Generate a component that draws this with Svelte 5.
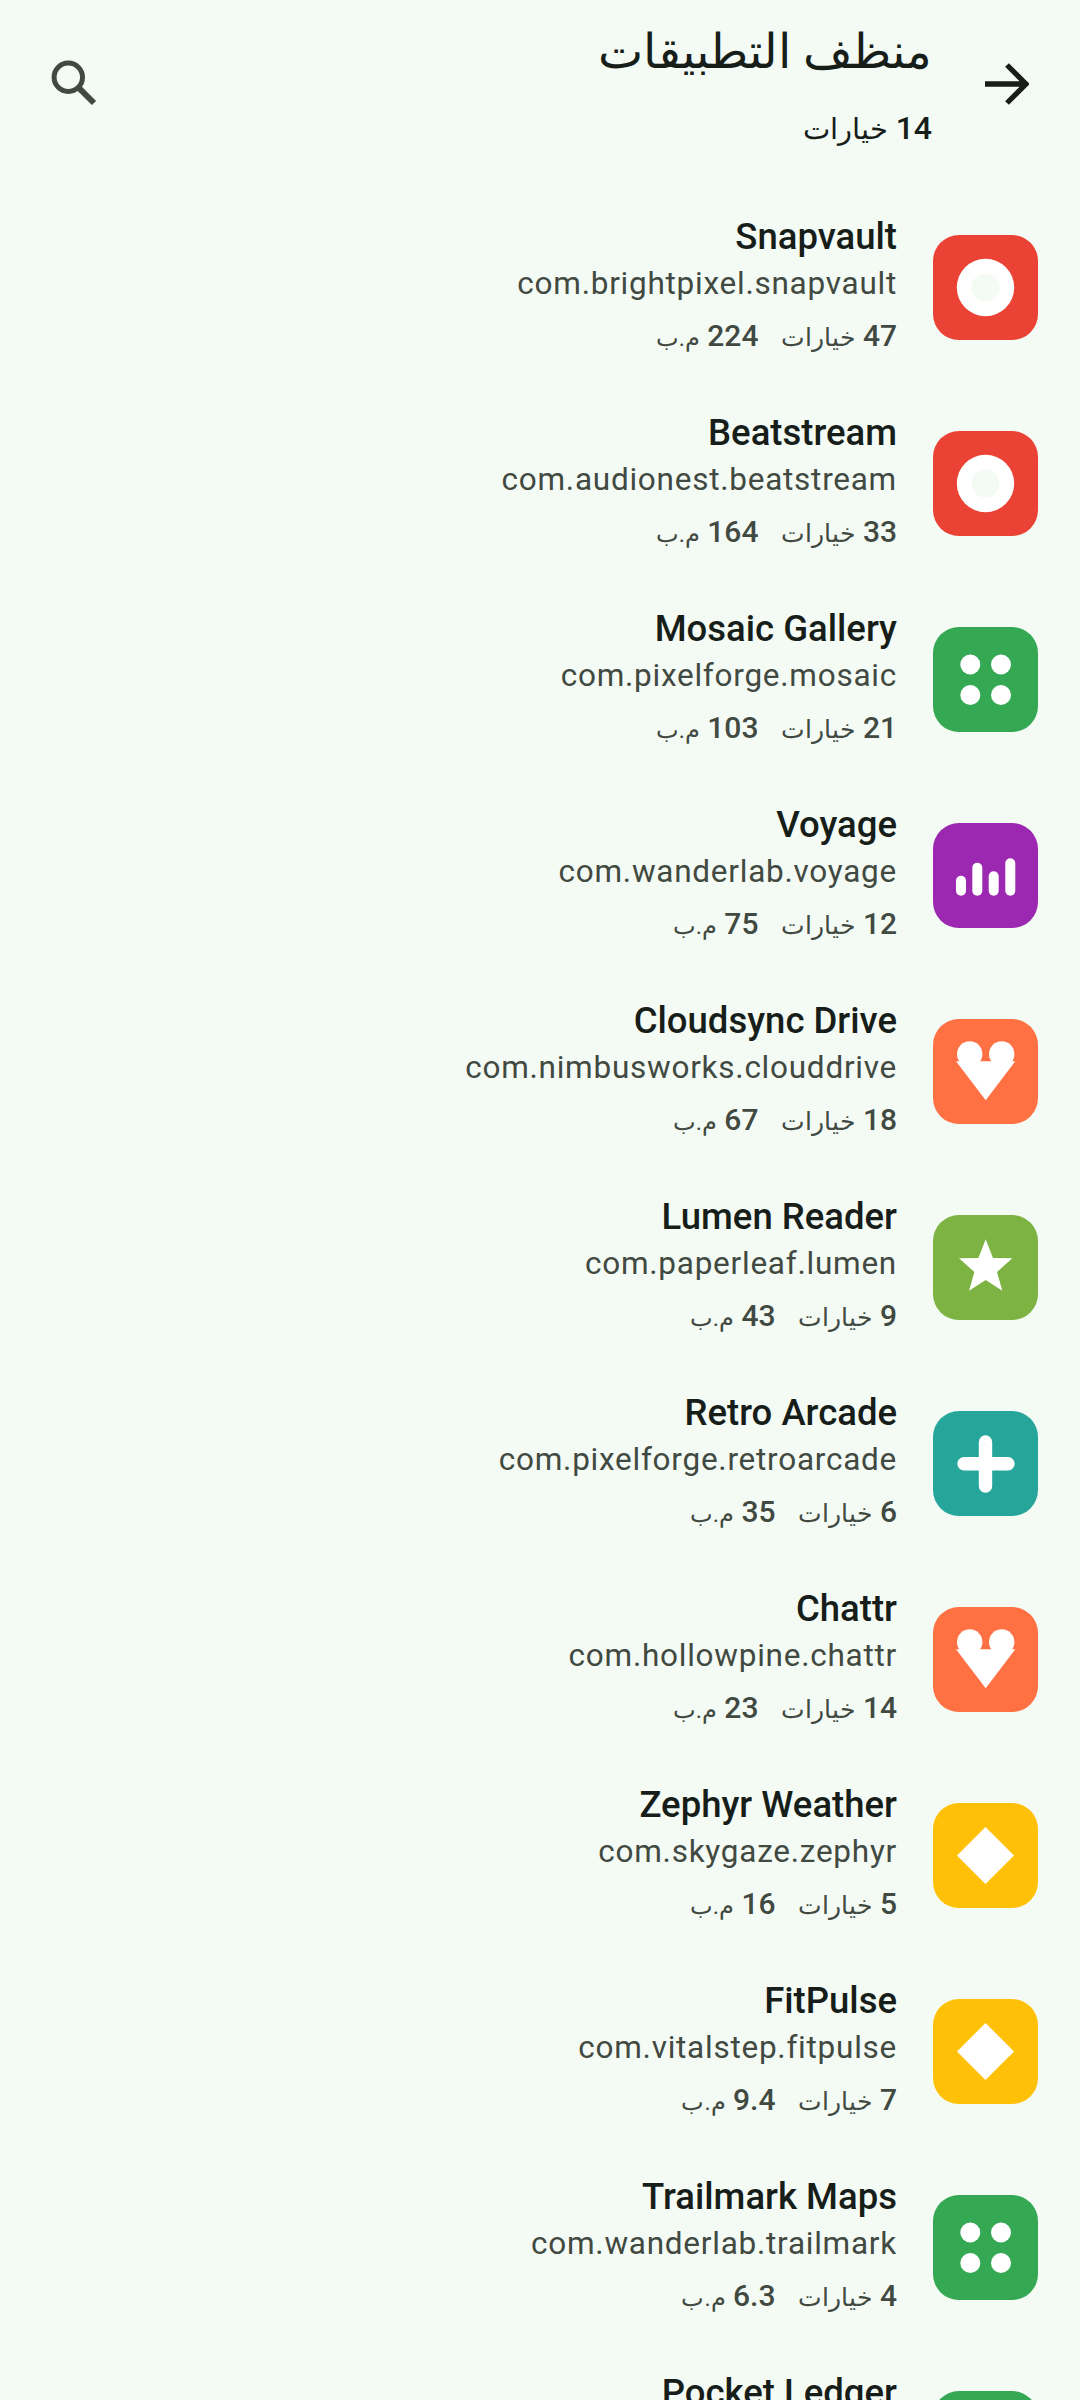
<script>
  const apps = [
    { name: 'Snapvault', pkg: 'com.brightpixel.snapvault', options: '47', size: '224', color: '#ea4335', icon: 'ring' },
    { name: 'Beatstream', pkg: 'com.audionest.beatstream', options: '33', size: '164', color: '#ea4335', icon: 'ring' },
    { name: 'Mosaic Gallery', pkg: 'com.pixelforge.mosaic', options: '21', size: '103', color: '#34a853', icon: 'dots' },
    { name: 'Voyage', pkg: 'com.wanderlab.voyage', options: '12', size: '75', color: '#9c27b0', icon: 'bars' },
    { name: 'Cloudsync Drive', pkg: 'com.nimbusworks.clouddrive', options: '18', size: '67', color: '#ff7043', icon: 'heart' },
    { name: 'Lumen Reader', pkg: 'com.paperleaf.lumen', options: '9', size: '43', color: '#7cb342', icon: 'star' },
    { name: 'Retro Arcade', pkg: 'com.pixelforge.retroarcade', options: '6', size: '35', color: '#26a69a', icon: 'plus' },
    { name: 'Chattr', pkg: 'com.hollowpine.chattr', options: '14', size: '23', color: '#ff7043', icon: 'heart' },
    { name: 'Zephyr Weather', pkg: 'com.skygaze.zephyr', options: '5', size: '16', color: '#ffc107', icon: 'diamond' },
    { name: 'FitPulse', pkg: 'com.vitalstep.fitpulse', options: '7', size: '9.4', color: '#ffc107', icon: 'diamond' },
    { name: 'Trailmark Maps', pkg: 'com.wanderlab.trailmark', options: '4', size: '6.3', color: '#34a853', icon: 'dots' },
    { name: 'Pocket Ledger', pkg: 'com.pocketledger.app', options: '3', size: '4.1', color: '#34a853', icon: 'dots' }
  ]
</script>

<div class="screen" dir="rtl">
  <header class="topbar">
    <button class="icon-btn back" aria-label="رجوع">
      <svg viewBox="0 0 44 44" width="44" height="44">
        <path d="M0 22H41M22 3L41 22L22 41" fill="none" stroke="#1a1c1a" stroke-width="5.3" />
      </svg>
    </button>
    <div class="heading">
      <h1>منظف التطبيقات</h1>
      <p class="count"><b>14</b> <span>خيارات</span></p>
    </div>
    <button class="icon-btn search" aria-label="بحث">
      <svg viewBox="0 0 50 50" width="50" height="50">
        <circle cx="18.3" cy="17.3" r="14.2" fill="none" stroke="#414941" stroke-width="5" />
        <path d="M28.3 27.3L44 43" fill="none" stroke="#414941" stroke-width="6" />
      </svg>
    </button>
  </header>

  <ul class="list">
    {#each apps as app}
      <li class="row">
        <div class="app-icon" style="background: {app.color}">
          <svg viewBox="0 0 105 105" width="105" height="105">
            {#if app.icon === 'ring'}
              <circle cx="52.5" cy="52.5" r="28.7" fill="#fff" />
              <circle cx="52.5" cy="52.5" r="14" fill="#f4fbf4" />
            {:else if app.icon === 'dots'}
              <circle cx="37.3" cy="37.5" r="10" fill="#fff" />
              <circle cx="68" cy="37.5" r="10" fill="#fff" />
              <circle cx="37.3" cy="68" r="10" fill="#fff" />
              <circle cx="68" cy="68" r="10" fill="#fff" />
            {:else if app.icon === 'bars'}
              <rect x="23" y="52.7" width="10" height="20" rx="5" fill="#fff" />
              <rect x="39.3" y="39.7" width="10" height="33" rx="5" fill="#fff" />
              <rect x="55.7" y="48.3" width="10" height="24.4" rx="5" fill="#fff" />
              <rect x="72.3" y="35.3" width="10" height="37.4" rx="5" fill="#fff" />
            {:else if app.icon === 'heart'}
              <circle cx="36.7" cy="35" r="12.7" fill="#fff" />
              <circle cx="68.7" cy="35" r="12.7" fill="#fff" />
              <path d="M23 42.3H82.3L52.7 81.3Z" fill="#fff" />
            {:else if app.icon === 'star'}
              <path d="M52.7 24.3L60 43L79.3 43.3L64 57L69.3 75.7L52.7 65L36 75.7L41.4 57L26 43.3L45.4 43Z" fill="#fff" />
            {:else if app.icon === 'plus'}
              <path d="M52.5 31V75M31 52.7H75" fill="none" stroke="#fff" stroke-width="13.4" stroke-linecap="round" />
            {:else if app.icon === 'diamond'}
              <path d="M52.5 24L81 52.5L52.5 81L24 52.5Z" fill="#fff" />
            {/if}
          </svg>
        </div>
        <div class="info">
          <div class="name" dir="auto">{app.name}</div>
          <div class="pkg" dir="auto">{app.pkg}</div>
          <div class="stats">
            <span><b>{app.options}</b> <i class="label">خيارات</i></span>
            <span><b>{app.size}</b> <i class="unit">م.ب</i></span>
          </div>
        </div>
      </li>
    {/each}
  </ul>
</div>

<style>
  :global(body) {
    margin: 0;
    background: #f4fbf4;
  }

  .screen {
    width: 1080px;
    height: 2400px;
    overflow: hidden;
    background: #f4fbf4;
    font-family: Roboto, serif;
    color: #171d19;
  }

  .topbar {
    display: flex;
    align-items: flex-start;
    height: 197px;
    box-sizing: border-box;
    padding: 0 51px 0 50px;
  }

  .icon-btn {
    border: 0;
    padding: 0;
    background: none;
    display: flex;
  }

  .back {
    margin-top: 62px;
  }

  .search {
    margin-top: 60px;
    margin-right: auto;
    direction: ltr;
  }

  .heading {
    margin-right: 53px;
    margin-top: 19px;
  }

  h1 {
    margin: 0;
    font-size: 48px;
    font-weight: 400;
    line-height: 66px;
  }

  .count {
    margin: 23px 0 0;
    font-size: 32px;
    line-height: 40px;
    color: #171d19;
  }

  .count b {
    font-weight: 500;
  }

  .count span {
    font-size: 28.5px;
  }

  .list {
    list-style: none;
    margin: 0;
    padding: 0 42px 0 0;
  }

  .row {
    display: flex;
    align-items: flex-start;
    height: 196px;
  }

  .app-icon {
    width: 105px;
    height: 105px;
    flex: none;
    margin-top: 38px;
    border-radius: 26px;
    overflow: hidden;
  }

  .app-icon svg {
    display: block;
  }

  .info {
    margin-right: 36px;
    padding-top: 16px;
  }

  .name {
    font-size: 36.5px;
    font-weight: 500;
    line-height: 48px;
    text-align: right;
  }

  .pkg {
    margin-top: 1px;
    font-size: 31.5px;
    line-height: 44px;
    letter-spacing: 0.75px;
    color: #414941;
    text-align: right;
  }

  .stats {
    display: flex;
    gap: 23px;
    margin-top: 10px;
    font-size: 30px;
    line-height: 40px;
    color: #414941;
  }

  .stats b {
    font-weight: 500;
  }

  .stats i {
    font-style: normal;
  }

  .label {
    font-size: 25px;
  }

  .unit {
    font-size: 23.5px;
  }
</style>
